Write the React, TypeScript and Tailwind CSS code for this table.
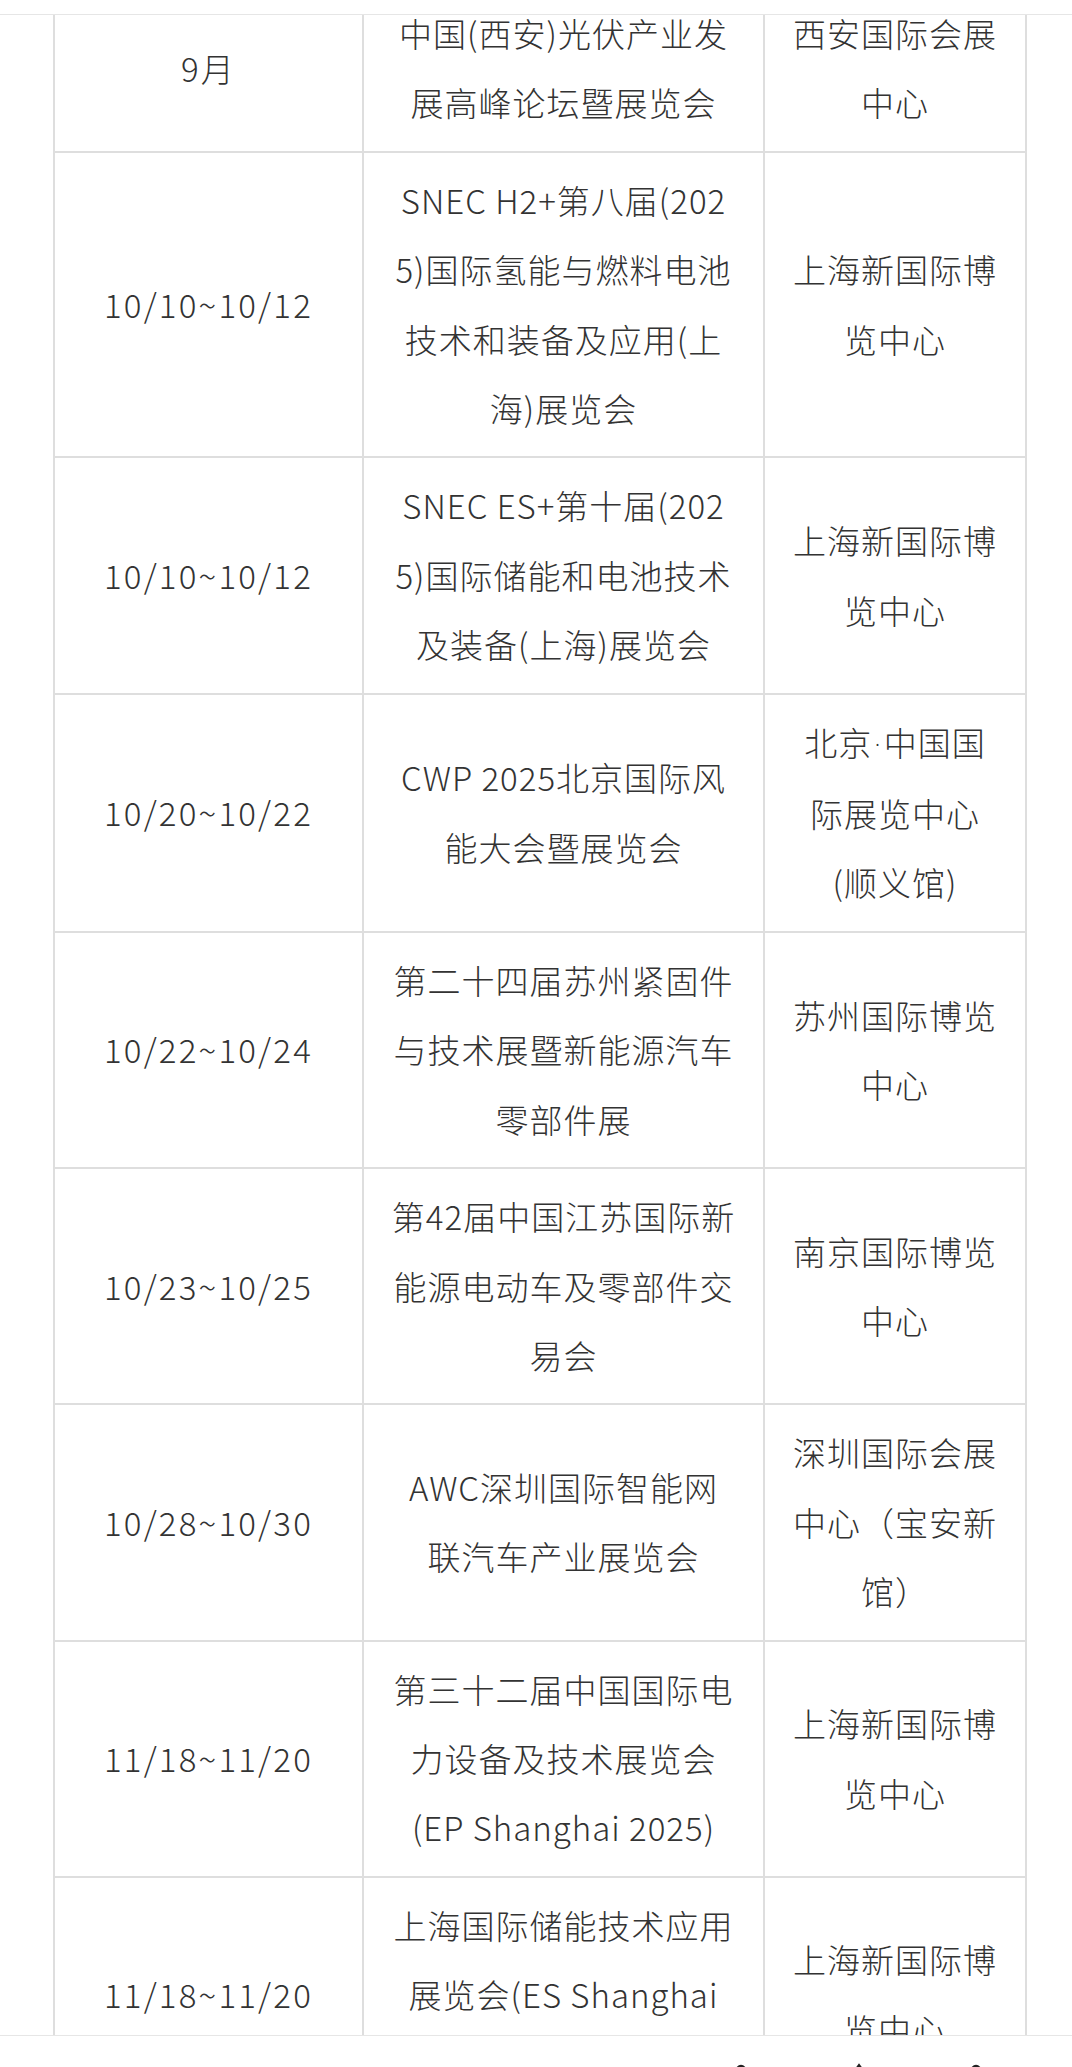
import React from 'react';

type Row = { date: string; name: React.ReactNode[]; venue: React.ReactNode[] };

const dot = <span style={{ fontFamily: '"DejaVu Sans", sans-serif' }}>·</span>;

const rows: Row[] = [
  { date: '9月', name: ['中国(西安)光伏产业发', '展高峰论坛暨展览会'], venue: ['西安国际会展', '中心'] },
  {
    date: '10/10~10/12',
    name: ['SNEC H2+第八届(202', '5)国际氢能与燃料电池', '技术和装备及应用(上', '海)展览会'],
    venue: ['上海新国际博', '览中心'],
  },
  {
    date: '10/10~10/12',
    name: ['SNEC ES+第十届(202', '5)国际储能和电池技术', '及装备(上海)展览会'],
    venue: ['上海新国际博', '览中心'],
  },
  {
    date: '10/20~10/22',
    name: ['CWP 2025北京国际风', '能大会暨展览会'],
    venue: [<>北京{dot}中国国</>, '际展览中心', '(顺义馆)'],
  },
  {
    date: '10/22~10/24',
    name: ['第二十四届苏州紧固件', '与技术展暨新能源汽车', '零部件展'],
    venue: ['苏州国际博览', '中心'],
  },
  {
    date: '10/23~10/25',
    name: ['第42届中国江苏国际新', '能源电动车及零部件交', '易会'],
    venue: ['南京国际博览', '中心'],
  },
  {
    date: '10/28~10/30',
    name: ['AWC深圳国际智能网', '联汽车产业展览会'],
    venue: ['深圳国际会展', '中心（宝安新', '馆）'],
  },
  {
    date: '11/18~11/20',
    name: ['第三十二届中国国际电', '力设备及技术展览会', '(EP Shanghai 2025)'],
    venue: ['上海新国际博', '览中心'],
  },
  {
    date: '11/18~11/20',
    name: ['上海国际储能技术应用', '展览会(ES Shanghai', '2025)'],
    venue: ['上海新国际博', '览中心'],
  },
];

function Lines({ lines }: { lines: React.ReactNode[] }) {
  return (
    <>
      {lines.map((l, i) => (
        <div key={i} className="whitespace-nowrap">
          {l}
        </div>
      ))}
    </>
  );
}

export default function App() {
  const cell = 'border-2 border-[#dedede] py-[13px] text-center align-middle';
  return (
    <div
      className="relative h-[2067px] w-[1072px] overflow-hidden bg-white text-[#333333]"
      style={{ fontFamily: '"Noto Sans CJK SC", "Noto Sans", sans-serif' }}
    >
      {/* scrolled content */}
      <div className="-mt-[16px] pl-[53px]">
        <table className="w-[972px] table-fixed border-collapse text-[33px] font-light leading-[69.4px] tracking-[1px]">
          <colgroup>
            <col className="w-[309px]" />
            <col className="w-[401px]" />
            <col className="w-[262px]" />
          </colgroup>
          <tbody>
            {rows.map((r, i) => (
              <tr key={i}>
                <td className={`${cell} tracking-[2.2px]`}>{r.date}</td>
                <td className={cell}>
                  <Lines lines={r.name} />
                </td>
                <td className={cell}>
                  <Lines lines={r.venue} />
                </td>
              </tr>
            ))}
          </tbody>
        </table>
      </div>

      {/* top bar */}
      <div className="absolute left-0 right-0 top-0 h-[15px] border-b border-[#e6e6e6] bg-white" />

      {/* bottom toolbar, mostly off screen */}
      <div className="absolute bottom-0 left-0 right-0 h-[32px] border-t border-[#e6e6e6] bg-white">
        <div className="relative h-full">
          <svg className="absolute left-[733px] top-[26px]" width="16" height="16" viewBox="0 0 16 16">
            <path d="M3 8 Q8 0 13 8" fill="none" stroke="#222" strokeWidth="2.5" />
          </svg>
          <svg className="absolute left-[853px] top-[27px]" width="12" height="12" viewBox="0 0 12 12">
            <path d="M3 6 L6 2 L9 6" fill="none" stroke="#222" strokeWidth="2" />
          </svg>
          <svg className="absolute left-[968px] top-[26px]" width="16" height="16" viewBox="0 0 16 16">
            <path d="M3 8 Q8 0 13 8" fill="none" stroke="#222" strokeWidth="2.5" />
          </svg>
        </div>
      </div>
    </div>
  );
}
